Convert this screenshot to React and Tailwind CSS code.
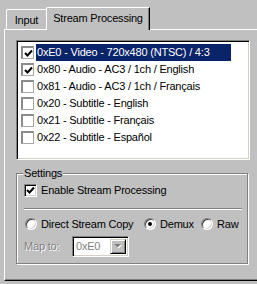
import React from "react";

const streams = [
  { id: "0xE0", label: "0xE0 - Video - 720x480 (NTSC) / 4:3", checked: true, selected: true },
  { id: "0x80", label: "0x80 - Audio - AC3 / 1ch / English", checked: true },
  { id: "0x81", label: "0x81 - Audio - AC3 / 1ch / Français", checked: false },
  { id: "0x20", label: "0x20 - Subtitle - English", checked: false },
  { id: "0x21", label: "0x21 - Subtitle - Français", checked: false },
  { id: "0x22", label: "0x22 - Subtitle - Español", checked: false },
];

const Check = () => (
  <svg width="9" height="9" viewBox="0 0 9 9" className="block">
    <path d="M1 4 L3.5 6.5 L8 1.5" fill="none" stroke="#000" strokeWidth="2" />
  </svg>
);

const ListCheck = ({ checked }) => (
  <div className="w-[13px] h-[13px] flex items-center justify-center bg-white border-t-2 border-l-2 border-b border-r border-t-[#8c8c8c] border-l-[#8c8c8c] border-b-[#a8a8a8] border-r-[#a8a8a8]">
    {checked && <Check />}
  </div>
);

const SunkenCheck = ({ checked }) => (
  <div className="w-[13px] h-[13px] flex items-center justify-center bg-white border border-t-[#808080] border-l-[#808080] border-b-white border-r-white shadow-[inset_1px_1px_0_#000,inset_-1px_-1px_0_#d4d0c8]">
    {checked && <Check />}
  </div>
);

const Radio = ({ checked, label, className }) => (
  <div className={`flex items-center ${className || ""}`}>
    <div className="w-[12px] h-[12px] rounded-full bg-white border border-t-[#808080] border-l-[#808080] border-b-white border-r-white shadow-[inset_1px_1px_0_#404040,inset_-1px_-1px_0_#d4d0c8] flex items-center justify-center">
      {checked && <div className="w-[4px] h-[4px] rounded-full bg-black" />}
    </div>
    <span className="ml-[4px] whitespace-nowrap">{label}</span>
  </div>
);

export default function App() {
  return (
    <div
      className="w-[257px] h-[284px] bg-[#c0c0c0] overflow-hidden text-[11px] leading-[13px] tracking-[-0.2px] text-black"
      style={{ fontFamily: '"Liberation Sans", Arial, sans-serif' }}
    >
      {/* tabs */}
      <div className="h-[29px] flex items-end pl-[6px]">
        <div className="w-[40px] h-[20px] border-l border-t border-white rounded-tl-[2px] flex items-center justify-center pt-[2px]">
          Input
        </div>
        <div className="relative z-10 -mb-px w-[104px] h-[23px] bg-[#c0c0c0] border-l border-t border-white border-r border-r-black rounded-tl-[2px] shadow-[inset_-1px_0_0_#808080] flex items-center justify-center pb-[2px]">
          Stream Processing
        </div>
      </div>

      {/* panel */}
      <div className="ml-[4px] w-[260px] h-[252px] border-l border-t border-white border-b border-b-black shadow-[inset_0_-1px_0_#808080] pl-[11px] pt-[10px]">
        {/* list */}
        <div className="w-[234px] h-[120px] bg-white border border-t-[#808080] border-l-[#808080] border-b-white border-r-white shadow-[inset_1px_1px_0_#000,inset_-1px_-1px_0_#d4d0c8] pt-[3px] pl-[4px]">
          {streams.map((s) => (
            <div key={s.id} className="h-[17px] flex items-center">
              <ListCheck checked={s.checked} />
              <div
                className={`ml-[2px] w-[195px] h-[17px] flex items-center pl-[1px] whitespace-nowrap ${
                  s.selected ? "bg-[#0a246a] text-white" : ""
                }`}
              >
                {s.label}
              </div>
            </div>
          ))}
        </div>

        {/* settings group */}
        <div className="relative mt-[13px] w-[232px] h-[91px] border border-[#808080] shadow-[1px_1px_0_#fff,inset_1px_1px_0_#fff] pl-[7px] pt-[10px]">
          <span className="absolute -top-[7px] left-[6px] px-[1px] bg-[#c0c0c0]">Settings</span>

          <div className="flex items-center h-[13px]">
            <SunkenCheck checked />
            <span className="ml-[4px]">Enable Stream Processing</span>
          </div>

          <div className="mt-[11px] w-[218px] h-[2px] border-t border-t-[#808080] border-b border-b-white" />

          <div className="mt-[8px] flex items-center h-[12px]">
            <Radio label="Direct Stream Copy" className="ml-[1px] w-[119px]" />
            <Radio label="Demux" checked className="w-[57px]" />
            <Radio label="Raw" />
          </div>

          <div className="mt-[6px] flex items-center h-[21px]">
            <span className="text-[#808080] [text-shadow:1px_1px_0_#fff] w-[48px]">Map to:</span>
            <div className="w-[57px] h-[21px] bg-white border border-t-[#808080] border-l-[#808080] border-b-white border-r-white shadow-[inset_1px_1px_0_#000,inset_-1px_-1px_0_#d4d0c8] flex items-center p-[2px]">
              <span className="flex-1 pl-[1px] text-[#808080]">0xE0</span>
              <div className="w-[16px] h-[15px] bg-[#c0c0c0] border border-t-[#d4d0c8] border-l-[#d4d0c8] border-b-black border-r-black shadow-[inset_1px_1px_0_#fff,inset_-1px_-1px_0_#808080] flex items-center justify-center">
                <svg width="8" height="5" viewBox="0 0 8 5" className="block">
                  <path d="M1 1 H8 L4.5 4.5 Z" fill="#fff" />
                  <path d="M0 0 H7 L3.5 3.5 Z" fill="#808080" />
                </svg>
              </div>
            </div>
          </div>
        </div>
      </div>
    </div>
  );
}
